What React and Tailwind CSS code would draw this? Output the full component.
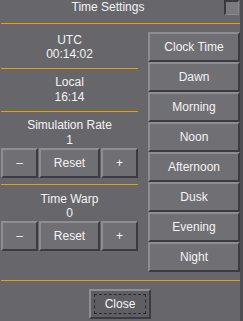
import React from "react";

const bevel =
  "border-2 border-t-[#8e8d92] border-l-[#8e8d92] border-b-[#3c3b3f] border-r-[#3c3b3f] bg-[#706f74] flex items-center justify-center";

function Btn({ className = "", children }) {
  return <div className={`${bevel} ${className}`}>{children}</div>;
}

function Rule({ className = "" }) {
  return <div className={`h-px bg-[#e8a200] ${className}`} />;
}

function Stepper() {
  return (
    <div className="flex gap-px">
      <Btn className="w-[37px] h-[30px]">–</Btn>
      <Btn className="w-[61px] h-[30px]">Reset</Btn>
      <Btn className="w-[37px] h-[30px]">+</Btn>
    </div>
  );
}

const presets = [
  "Clock Time",
  "Dawn",
  "Morning",
  "Noon",
  "Afternoon",
  "Dusk",
  "Evening",
  "Night",
];

export default function App() {
  return (
    <div
      className="w-[243px] h-[321px] bg-[#67666b] text-[#f4f4f4] text-[12px] leading-[14px] pl-px border-r-[3px] border-[#4f4e53] overflow-hidden"
      style={{ fontFamily: '"Liberation Sans", Arial, sans-serif' }}
    >
      {/* Header */}
      <div className="flex h-[23px]">
        <div className="w-[214px] text-center">Time Settings</div>
        <div className="ml-[9px] w-[15px] h-[15px] border-t-2 border-l-2 border-[#3a393d] border-r border-b border-r-[#8a898e] border-b-[#8a898e] bg-[#7a797e]" />
      </div>
      <Rule className="w-[240px]" />

      {/* Body */}
      <div className="flex gap-[10px] h-[256px]">
        <div className="w-[137px] flex flex-col text-center">
          <div className="pt-[9px] h-[44px]">
            <div>UTC</div>
            <div>00:14:02</div>
          </div>
          <Rule />
          <div className="pt-[6px] h-[42px]">
            <div>Local</div>
            <div className="mt-px">16:14</div>
          </div>
          <Rule />
          <div className="pt-[6px] h-[72px]">
            <div>Simulation Rate</div>
            <div className="mt-px">1</div>
            <div className="mt-px">
              <Stepper />
            </div>
          </div>
          <Rule />
          <div className="pt-[7px]">
            <div>Time Warp</div>
            <div>0</div>
            <div className="mt-px">
              <Stepper />
            </div>
          </div>
        </div>

        <div className="w-[92px] pt-[8px] flex flex-col">
          {presets.map((p) => (
            <Btn key={p} className="h-[30px]">
              {p}
            </Btn>
          ))}
        </div>
      </div>
      <Rule className="w-[240px]" />

      {/* Footer */}
      <div className="pt-[8px] pl-[88px]">
        <div className="w-[62px] h-[30px] border-2 border-t-[#8e8d92] border-l-[#8e8d92] border-b-[#3c3b3f] border-r-[#3c3b3f] bg-[#5f5e63] p-[3px]">
          <div className="h-full border border-dashed border-[#2c2b2e] flex items-center justify-center">
            Close
          </div>
        </div>
      </div>
    </div>
  );
}
